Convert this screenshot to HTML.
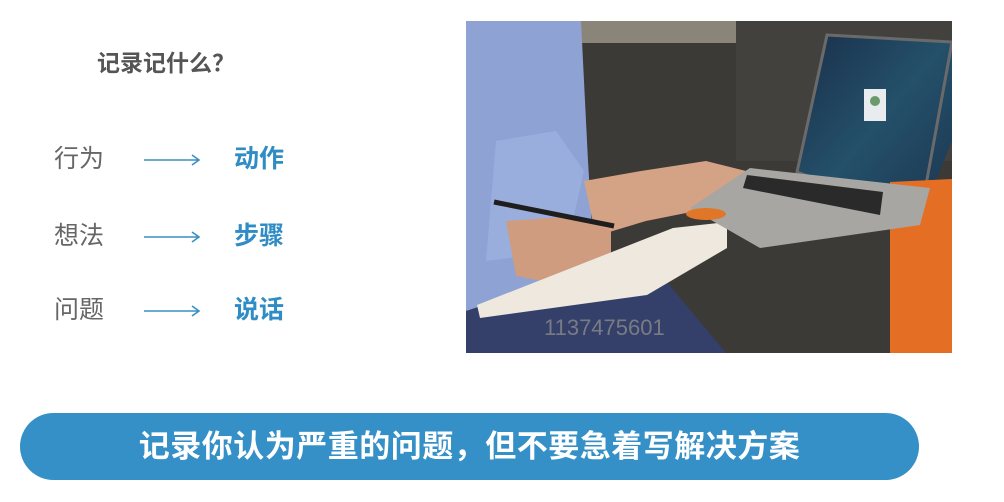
<!DOCTYPE html>
<html><head><meta charset="utf-8"><style>
*{margin:0;padding:0;box-sizing:border-box}
body{width:1004px;height:502px;background:#fff;position:relative;overflow:hidden;font-family:"Liberation Sans","Noto Sans CJK SC",sans-serif}
.t{position:absolute;white-space:nowrap;line-height:1}
.title{left:97px;top:52px;font-size:23px;font-weight:bold;color:#555}
.l{left:54px;font-size:25px;color:#666}
.r{left:234px;font-size:25px;font-weight:bold;color:#2f8cc4}
.arr{position:absolute;left:143px;width:58px;height:12px}
.banner{position:absolute;left:20px;top:413px;width:899px;height:67px;border-radius:34px;background:#3490c6;color:#fff;font-size:31px;font-weight:bold;text-align:center;line-height:67px;letter-spacing:0.5px}
</style></head><body>
<div class="t title">记录记什么？</div>
<div class="t l" style="top:147px">行为</div>
<div class="t l" style="top:224px">想法</div>
<div class="t l" style="top:298px">问题</div>
<div class="t r" style="top:147px">动作</div>
<div class="t r" style="top:224px">步骤</div>
<div class="t r" style="top:298px">说话</div>
<svg class="arr" style="top:154px" viewBox="0 0 58 12"><path d="M1 6H56M49 1L56 6L49 11" stroke="#3a8fc4" stroke-width="1.6" fill="none"/></svg>
<svg class="arr" style="top:231px" viewBox="0 0 58 12"><path d="M1 6H56M49 1L56 6L49 11" stroke="#3a8fc4" stroke-width="1.6" fill="none"/></svg>
<svg class="arr" style="top:305px" viewBox="0 0 58 12"><path d="M1 6H56M49 1L56 6L49 11" stroke="#3a8fc4" stroke-width="1.6" fill="none"/></svg>

<svg style="position:absolute;left:466px;top:21px" width="486" height="332" viewBox="0 0 486 332">
<defs><linearGradient id="sc" x1="0" y1="0" x2="1" y2="1"><stop offset="0" stop-color="#1a2f4a"/><stop offset="0.5" stop-color="#24506a"/><stop offset="1" stop-color="#1c3550"/></linearGradient></defs>
<rect width="486" height="332" fill="#3b3a37"/>
<rect x="60" y="0" width="215" height="22" fill="#8b8478"/>
<rect x="270" y="0" width="216" height="140" fill="#43413e"/>
<path d="M0 0H115L122 140L128 240L80 270L0 290Z" fill="#8fa2d4"/>
<path d="M30 120L90 110L118 150L100 230L20 240Z" fill="#9aaedd"/>
<path d="M0 290L120 250L200 260L260 332H0Z" fill="#34406a"/>
<path d="M118 160L175 150L240 140L280 150L290 185L260 200L230 190L180 200L130 215Z" fill="#d4a285"/>
<path d="M40 200L110 195L145 210L145 250L100 265L50 255Z" fill="#cf9c7f"/>
<path d="M28 181L148 205" stroke="#1e1e1e" stroke-width="5"/>
<path d="M11 284L207 207L261 201L261 227L181 274L14 297Z" fill="#eee8de"/>
<path d="M361 14L486 21L486 120L454 197L331 151Z" fill="url(#sc)"/>
<path d="M361 14L486 21L454 197L331 151Z" fill="none" stroke="#6a6a6a" stroke-width="3"/>
<rect x="398" y="68" width="22" height="32" fill="#e8ecee"/>
<circle cx="409" cy="80" r="5" fill="#6a9a6a"/>
<path d="M424 161L486 158L486 332H424Z" fill="#e46f24"/>
<path d="M284 147L464 167L454 204L294 227L224 187Z" fill="#a8a6a3"/>
<path d="M281 154L417 171L414 194L277 167Z" fill="#2a2a2a"/>
<ellipse cx="240" cy="193" rx="20" ry="6" fill="#e07628"/>
<text x="78" y="314" font-family="Liberation Sans,sans-serif" font-size="22" fill="#8a8a8a" fill-opacity="0.8">1137475601</text>
</svg>
<div class="banner">记录你认为严重的问题，但不要急着写解决方案</div>
</body></html>
